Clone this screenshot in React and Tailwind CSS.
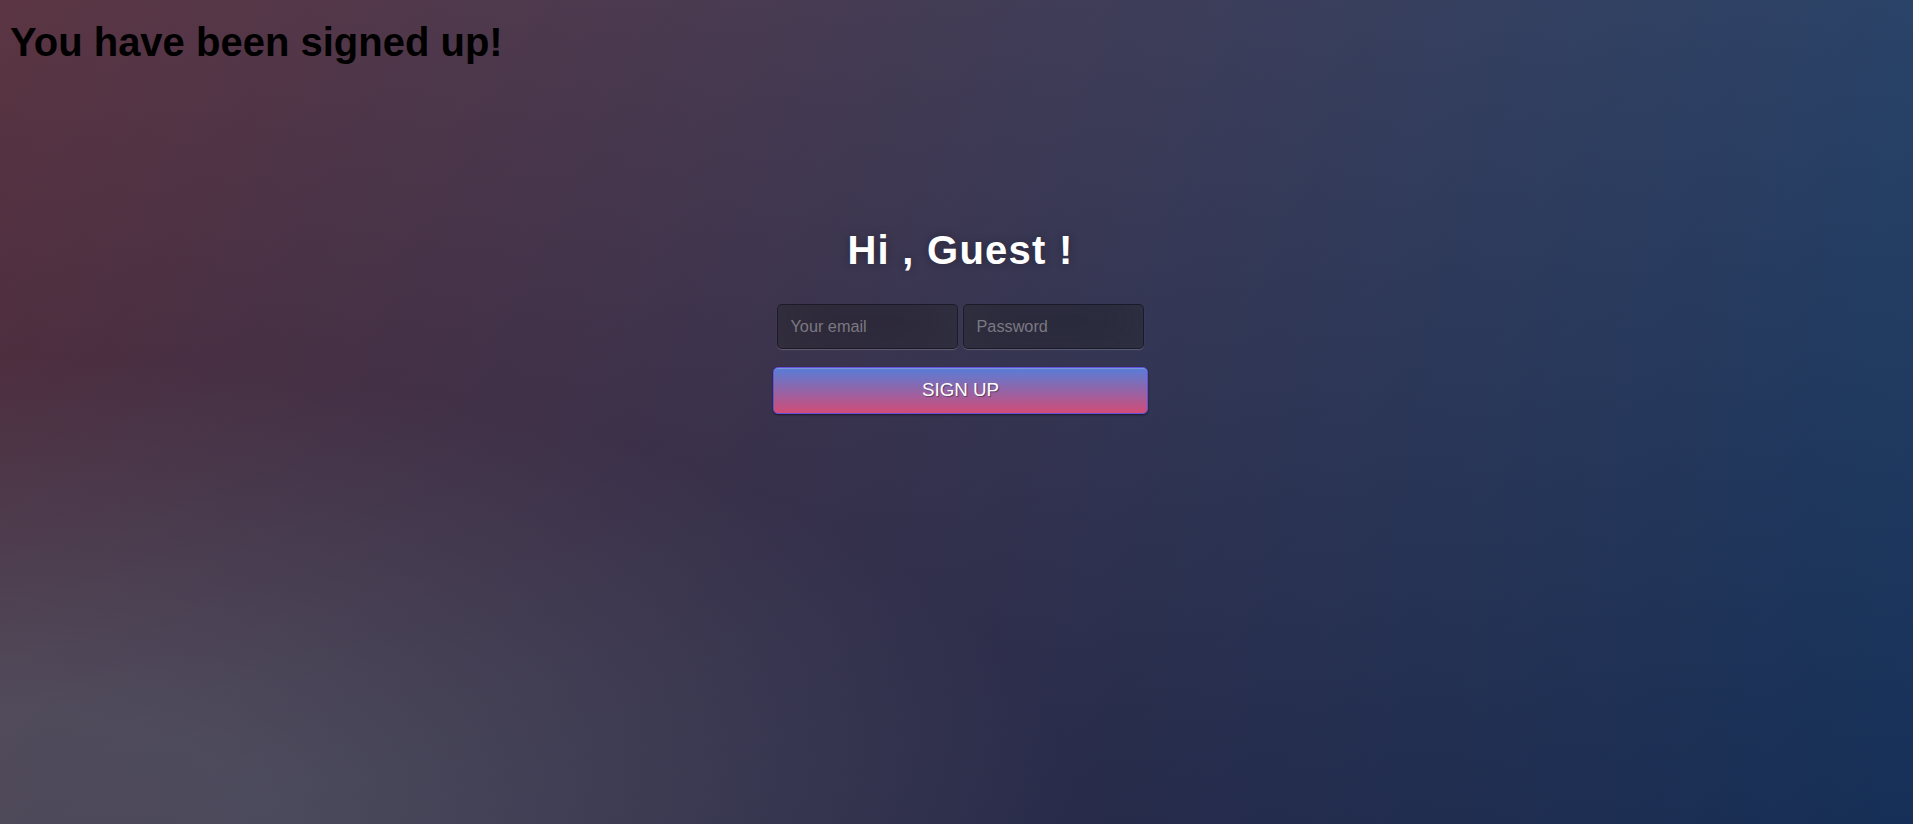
import { useState } from 'react';

function App() {
  const [email, setEmail] = useState('');
  const [password, setPassword] = useState('');

  return (
    <div className="h-[824px] w-full overflow-hidden bg-[#092756] bg-[radial-gradient(ellipse_farthest-corner_at_0%_100%,rgba(104,128,138,.4)_10%,rgba(138,114,76,0)_40%),linear-gradient(to_bottom,rgba(57,173,219,.25)_0%,rgba(42,60,87,.4)_100%),linear-gradient(135deg,#670d10_0%,#092756_100%)] font-['Liberation_Sans',Arial,sans-serif]">
      {/* status message */}
      <div className="pt-[19px] pl-[10px]">
        <h1 className="text-[40px] leading-[46px] font-bold text-black">You have been signed up!</h1>
      </div>

      {/* login box */}
      <div className="mt-[161.5px] flex justify-center pl-[8px]">
        <div className="w-[375px] flex flex-col">
          <h1 className="text-center text-[40px] leading-[46px] font-bold text-white tracking-[1.25px] [text-shadow:0_0_10px_rgba(0,0,0,0.3)]">
            Hi , Guest !
          </h1>

          <div className="mt-[31px] flex justify-center gap-[5px]">
            <input
              type="text"
              value={email}
              onChange={(e) => setEmail(e.target.value)}
              placeholder="Your email"
              className="w-[181px] h-[45px] px-[12.5px] text-[16.25px] text-white bg-black/30 border border-black/30 rounded-[5px] outline-none placeholder:text-[#7b7982] shadow-[inset_0_-6px_56px_rgba(100,100,100,0.2),0_1px_1px_rgba(255,255,255,0.2)]"
            />
            <input
              type="password"
              value={password}
              onChange={(e) => setPassword(e.target.value)}
              placeholder="Password"
              className="w-[181px] h-[45px] px-[12.5px] text-[16.25px] text-white bg-black/30 border border-black/30 rounded-[5px] outline-none placeholder:text-[#7b7982] shadow-[inset_0_-6px_56px_rgba(100,100,100,0.2),0_1px_1px_rgba(255,255,255,0.2)]"
            />
          </div>

          <button className="mt-[18.5px] h-[46.5px] w-full rounded-[5px] border border-[#6550dc] bg-[linear-gradient(to_bottom,#577dd8,#d14c77)] text-[18.75px] text-white [text-shadow:1px_1px_1px_rgba(0,0,0,0.4)] shadow-[inset_0_1px_0_rgba(255,255,255,0.2),0_1px_2px_rgba(0,0,0,0.5)]">
            SIGN UP
          </button>
        </div>
      </div>
    </div>
  );
}

export default App;
